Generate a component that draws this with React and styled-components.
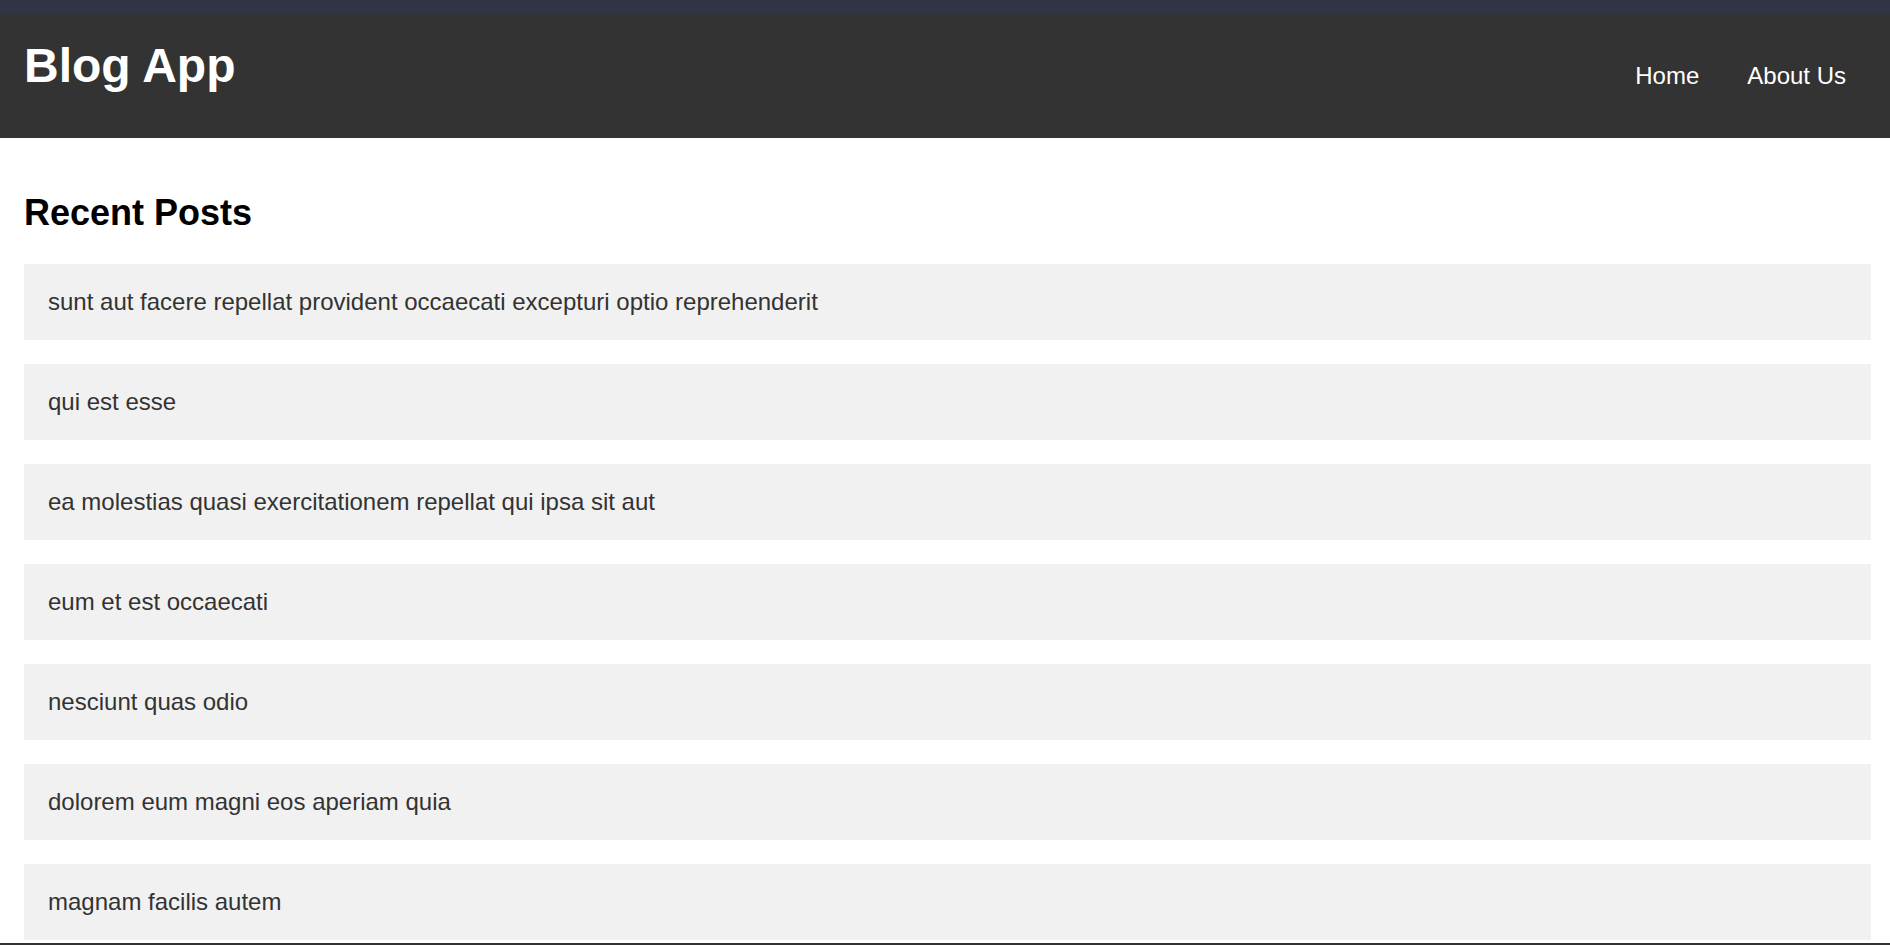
import React from 'react';
import styled, { createGlobalStyle } from 'styled-components';

const posts = [
  'sunt aut facere repellat provident occaecati excepturi optio reprehenderit',
  'qui est esse',
  'ea molestias quasi exercitationem repellat qui ipsa sit aut',
  'eum et est occaecati',
  'nesciunt quas odio',
  'dolorem eum magni eos aperiam quia',
  'magnam facilis autem',
];

const GlobalStyle = createGlobalStyle`
html{
  scrollbar-width:none;
}
body{
  margin:0;
  font-family:"Liberation Sans", Arial, sans-serif;
  font-size:24px;
  background:#fff;
  color:#000;
}
`

const TopStrip = styled.div`
height:14px;
background:#303444;
`

const Header = styled.header`
display:flex;
justify-content:space-between;
align-items:flex-start;
box-sizing:border-box;
height:124px;
padding:0 44px 0 24px;
background:#333;
color:#fff;
`

const Title = styled.h1`
margin:24px 0 0;
font-size:48px;
font-weight:700;
`

const Nav = styled.nav`
display:flex;
gap:48px;
align-self:center;
`

const NavLink = styled.a`
color:#fff;
text-decoration:none;
font-size:24px;
cursor:pointer;
`

const Main = styled.main`
padding:24px 19px 0 24px;
`

const Heading = styled.h2`
margin:30px 0;
font-size:36px;
font-weight:700;
`

const PostList = styled.ul`
list-style:none;
margin:0;
padding:0;
display:flex;
flex-direction:column;
gap:24px;
`

const PostItem = styled.li`
background:#f1f1f1;
padding:24px;
color:#333;
font-size:24px;
`

const Footer = styled.footer`
margin-top:3px;
height:40px;
background:#333;
`

function App(){
  return(
    <React.Fragment>
      <GlobalStyle/>
      <TopStrip/>
      <Header>
        <Title>Blog App</Title>
        <Nav>
          <NavLink>Home</NavLink>
          <NavLink>About Us</NavLink>
        </Nav>
      </Header>
      <Main>
        <Heading>Recent Posts</Heading>
        <PostList>
          {posts.map((p,i)=>(
            <PostItem key={i}>{p}</PostItem>
          ))}
        </PostList>
      </Main>
      <Footer/>
    </React.Fragment>
  )
}

export default App
